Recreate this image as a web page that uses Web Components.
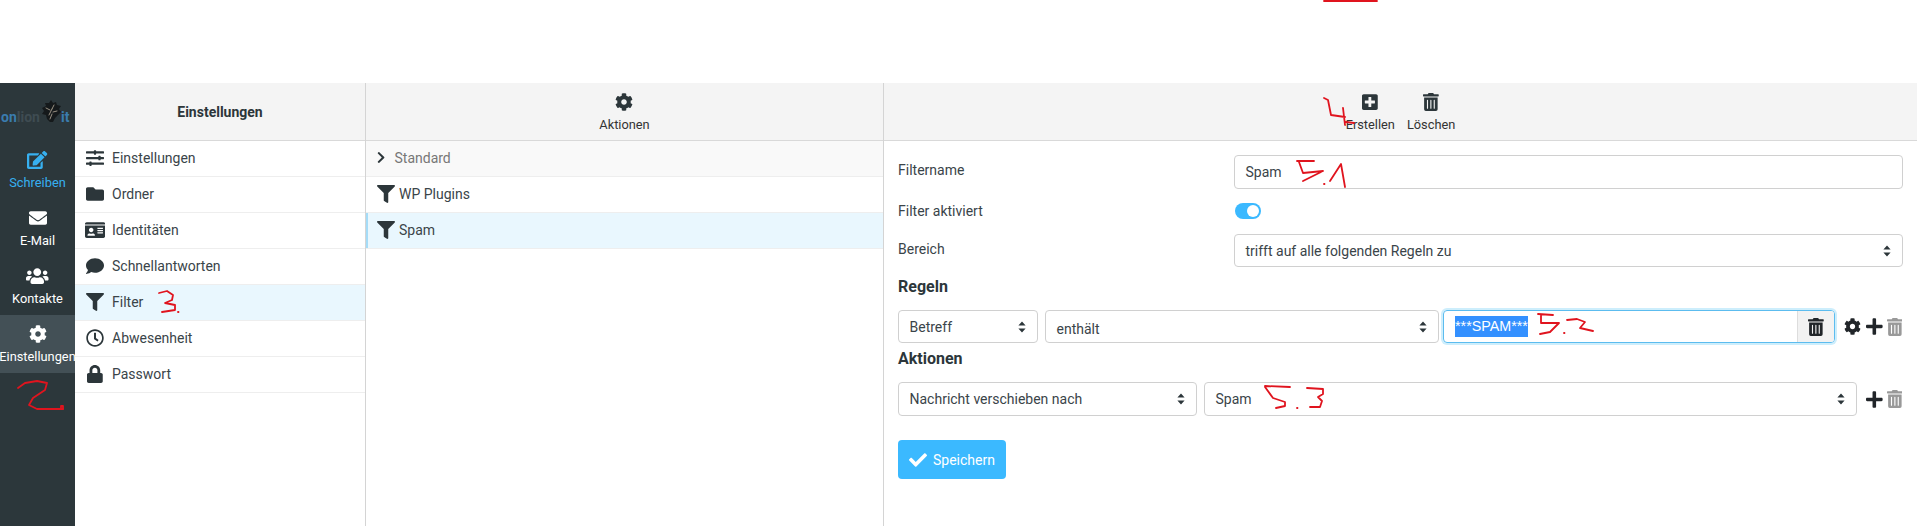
<!DOCTYPE html>
<html lang="de">
<head>
<meta charset="utf-8">
<title>Einstellungen</title>
<style>
    html, body { margin: 0; height: 100%; background: #fff; }
    body { font: 14px Roboto, "Liberation Sans", sans-serif; color: #2c363a; overflow: hidden; }
    settings-page { height: 526px; }
</style>
</head>
<body>
<settings-page>
    <side-rail slot="rail">
        <rail-item icon="edit" tone="blue">Schreiben</rail-item>
        <rail-item icon="envelope">E-Mail</rail-item>
        <rail-item icon="users">Kontakte</rail-item>
        <rail-item icon="cog" active>Einstellungen</rail-item>
    </side-rail>
    <list-pane slot="sections" width="291">
        <pane-head slot="head"><strong>Einstellungen</strong></pane-head>
        <list-row icon="sliders">Einstellungen</list-row>
        <list-row icon="folder">Ordner</list-row>
        <list-row icon="idcard">Identitäten</list-row>
        <list-row icon="comment">Schnellantworten</list-row>
        <list-row icon="filter" selected>Filter</list-row>
        <list-row icon="clock">Abwesenheit</list-row>
        <list-row icon="lock">Passwort</list-row>
    </list-pane>
    <list-pane slot="filters" width="518">
        <pane-head slot="head"><head-action icon="cog">Aktionen</head-action></pane-head>
        <list-row kind="group" icon="chevron">Standard</list-row>
        <list-row kind="filter" icon="filter">WP Plugins</list-row>
        <list-row kind="filter" icon="filter" selected marked>Spam</list-row>
    </list-pane>
    <div slot="main">
        <pane-head>
            <head-action icon="plussquare">Erstellen</head-action>
            <head-action icon="trash">Löschen</head-action>
        </pane-head>
        <filter-form></filter-form>
    </div>
    <ink-marks slot="ink"></ink-marks>
</settings-page>

<script>
const ICONS = {
    cog: [512, 'M487.4 315.7l-42.6-24.6c4.3-23.2 4.3-47 0-70.2l42.6-24.6c4.9-2.8 7.1-8.6 5.5-14-11.1-35.6-30-67.8-54.7-94.6-3.8-4.1-10-5.1-14.8-2.3L380.8 110c-17.9-15.4-38.5-27.3-60.8-35.1V25.8c0-5.6-3.9-10.5-9.4-11.7-36.7-8.2-74.3-7.8-109.2 0-5.5 1.2-9.4 6.1-9.4 11.7V75c-22.2 7.9-42.8 19.8-60.8 35.1L88.7 85.5c-4.9-2.8-11-1.9-14.8 2.3-24.7 26.7-43.6 58.9-54.7 94.6-1.7 5.4.6 11.2 5.5 14L67.3 221c-4.3 23.2-4.3 47 0 70.2l-42.6 24.6c-4.9 2.8-7.1 8.6-5.5 14 11.1 35.6 30 67.8 54.7 94.6 3.8 4.1 10 5.1 14.8 2.3l42.6-24.6c17.9 15.4 38.5 27.3 60.8 35.1v49.2c0 5.6 3.9 10.5 9.4 11.7 36.7 8.2 74.3 7.8 109.2 0 5.5-1.2 9.4-6.1 9.4-11.7v-49.2c22.2-7.9 42.8-19.8 60.8-35.1l42.6 24.6c4.9 2.8 11 1.9 14.8-2.3 24.7-26.7 43.6-58.9 54.7-94.6 1.5-5.5-.7-11.3-5.6-14.1zM256 336c-44.1 0-80-35.9-80-80s35.9-80 80-80 80 35.9 80 80-35.9 80-80 80z'],
    filter: [512, 'M487.976 0H24.028C2.71 0-8.047 25.866 7.058 40.971L192 225.941V432c0 7.831 3.821 15.17 10.237 19.662l80 55.98C298.02 518.69 320 507.493 320 487.98V225.941l184.947-184.97C520.021 25.896 509.338 0 487.976 0z'],
    plus: [448, 'M416 208H272V64c0-17.67-14.33-32-32-32h-32c-17.67 0-32 14.33-32 32v144H32c-17.67 0-32 14.33-32 32v32c0 17.67 14.33 32 32 32h144v144c0 17.67 14.33 32 32 32h32c17.67 0 32-14.33 32-32V304h144c17.67 0 32-14.33 32-32v-32c0-17.67-14.33-32-32-32z'],
    trash: [448, 'M32 464a48 48 0 0 0 48 48h288a48 48 0 0 0 48-48V128H32zm272-256a16 16 0 0 1 32 0v224a16 16 0 0 1-32 0zm-96 0a16 16 0 0 1 32 0v224a16 16 0 0 1-32 0zm-96 0a16 16 0 0 1 32 0v224a16 16 0 0 1-32 0zM432 32H312l-9.4-18.7A24 24 0 0 0 281.1 0H166.8a23.72 23.72 0 0 0-21.4 13.3L136 32H16A16 16 0 0 0 0 48v32a16 16 0 0 0 16 16h416a16 16 0 0 0 16-16V48a16 16 0 0 0-16-16z'],
    plussquare: [448, 'M400 32H48C21.5 32 0 53.5 0 80v352c0 26.5 21.5 48 48 48h352c26.5 0 48-21.5 48-48V80c0-26.5-21.5-48-48-48zm-32 252c0 6.6-5.4 12-12 12h-92v92c0 6.6-5.4 12-12 12h-56c-6.6 0-12-5.4-12-12v-92H92c-6.6 0-12-5.4-12-12v-56c0-6.6 5.4-12 12-12h92v-92c0-6.6 5.4-12 12-12h56c6.6 0 12 5.4 12 12v92h92c6.6 0 12 5.4 12 12v56z'],
    check: [512, 'M173.898 439.404l-166.4-166.4c-9.997-9.997-9.997-26.206 0-36.204l36.203-36.204c9.997-9.998 26.207-9.998 36.204 0L192 312.69 432.095 72.596c9.997-9.997 26.207-9.997 36.204 0l36.203 36.204c9.997 9.997 9.997 26.206 0 36.204l-294.4 294.401c-9.998 9.997-26.207 9.997-36.204-.001z'],
    chevron: [320, 'M285.476 272.971L91.132 467.314c-9.373 9.373-24.569 9.373-33.941 0l-22.667-22.667c-9.357-9.357-9.375-24.522-.04-33.901L188.505 256 34.484 101.255c-9.335-9.379-9.317-24.544.04-33.901l22.667-22.667c9.373-9.373 24.569-9.373 33.941 0L285.475 239.03c9.373 9.372 9.373 24.568.001 33.941z'],
    envelope: [512, 'M502.3 190.8c3.9-3.1 9.7-.2 9.7 4.7V400c0 26.5-21.5 48-48 48H48c-26.5 0-48-21.5-48-48V195.6c0-5 5.7-7.8 9.7-4.7 22.4 17.4 52.1 39.5 154.1 113.6 21.1 15.4 56.7 47.8 92.2 47.6 35.7.3 72-32.8 92.3-47.6 102-74.1 131.6-96.3 154-113.7zM256 320c23.2.4 56.6-29.2 73.4-41.4 132.7-96.3 142.8-104.7 173.4-128.7 5.8-4.5 9.2-11.5 9.2-18.9v-19c0-26.5-21.5-48-48-48H48C21.5 64 0 85.5 0 112v19c0 7.4 3.4 14.3 9.2 18.9 30.6 23.9 40.7 32.4 173.4 128.7 16.8 12.2 50.2 41.8 73.4 41.4z'],
    folder: [512, 'M464 128H272l-64-64H48C21.49 64 0 85.49 0 112v288c0 26.51 21.49 48 48 48h416c26.51 0 48-21.49 48-48V176c0-26.51-21.49-48-48-48z'],
    comment: [512, 'M256 32C114.6 32 0 125.1 0 240c0 49.6 21.4 95 57 130.7C44.5 421.1 2.7 466 2.2 466.5c-2.2 2.3-2.8 5.7-1.5 8.7S4.8 480 8 480c66.3 0 116-31.8 140.6-51.4 32.7 12.3 69 19.4 107.4 19.4 141.4 0 256-93.1 256-208S397.4 32 256 32z'],
    lock: [448, 'M400 224h-24v-72C376 68.2 307.8 0 224 0S72 68.2 72 152v72H48c-26.5 0-48 21.5-48 48v192c0 26.5 21.5 48 48 48h352c26.5 0 48-21.5 48-48V272c0-26.5-21.5-48-48-48zm-104 0H152v-72c0-39.7 32.3-72 72-72s72 32.3 72 72v72z'],
    clock: [512, 'M256 8C119 8 8 119 8 256s111 248 248 248 248-111 248-248S393 8 256 8zm0 448c-110.5 0-200-89.5-200-200S145.5 56 256 56s200 89.5 200 200-89.5 200-200 200zm61.8-104.4l-84.9-61.7c-3.1-2.3-4.9-5.9-4.9-9.7V116c0-6.6 5.4-12 12-12h32c6.6 0 12 5.4 12 12v141.7l66.8 48.6c5.4 3.9 6.5 11.4 2.6 16.8L334.6 349c-3.9 5.3-11.4 6.5-16.8 2.6z'],
    edit: [576, 'M402.6 83.2l90.2 90.2c3.8 3.8 3.8 10 0 13.8L274.4 405.6l-92.8 10.3c-12.4 1.4-22.9-9.1-21.5-21.5l10.3-92.8L388.8 83.2c3.8-3.8 10-3.8 13.8 0zm162-22.9l-48.8-48.8c-15.2-15.2-39.9-15.2-55.2 0l-35.4 35.4c-3.8 3.8-3.8 10 0 13.8l90.2 90.2c3.8 3.8 10 3.8 13.8 0l35.4-35.4c15.2-15.3 15.2-40 0-55.2zM384 346.2V448H64V128h229.8c3.2 0 6.2-1.3 8.5-3.5l40-40c7.6-7.6 2.2-20.5-8.5-20.5H48C21.5 64 0 85.5 0 112v352c0 26.5 21.5 48 48 48h352c26.5 0 48-21.5 48-48V306.2c0-10.7-12.9-16-20.5-8.5l-40 40c-2.2 2.3-3.5 5.3-3.5 8.5z'],
    users: [640, 'M96 224c35.3 0 64-28.7 64-64s-28.7-64-64-64-64 28.7-64 64 28.7 64 64 64zm448 0c35.3 0 64-28.7 64-64s-28.7-64-64-64-64 28.7-64 64 28.7 64 64 64zm32 32h-64c-17.6 0-33.5 7.1-45.1 18.6 40.3 22.1 68.9 62 75.1 109.4h66c17.7 0 32-14.3 32-32v-32c0-35.3-28.7-64-64-64zm-256 0c61.9 0 112-50.1 112-112S381.9 32 320 32 208 82.1 208 144s50.1 112 112 112zm76.8 32h-8.3c-20.8 10-43.9 16-68.5 16s-47.6-6-68.5-16h-8.3C179.6 288 128 339.6 128 403.2V432c0 26.5 21.5 48 48 48h288c26.5 0 48-21.5 48-48v-28.8c0-63.6-51.6-115.2-115.2-115.2zm-223.7-13.4C161.5 263.1 145.6 256 128 256H64c-35.3 0-64 28.7-64 64v32c0 17.7 14.3 32 32 32h65.9c6.3-47.4 34.9-87.3 75.2-109.4z'],
    sliders: [512, 'M496 384H160v-16c0-8.8-7.2-16-16-16h-32c-8.8 0-16 7.2-16 16v16H16c-8.8 0-16 7.2-16 16v32c0 8.8 7.2 16 16 16h80v16c0 8.8 7.2 16 16 16h32c8.8 0 16-7.2 16-16v-16h336c8.8 0 16-7.2 16-16v-32c0-8.8-7.2-16-16-16zm0-160h-80v-16c0-8.8-7.2-16-16-16h-32c-8.8 0-16 7.2-16 16v16H16c-8.8 0-16 7.2-16 16v32c0 8.8 7.2 16 16 16h336v16c0 8.8 7.2 16 16 16h32c8.8 0 16-7.2 16-16v-16h80c8.8 0 16-7.2 16-16v-32c0-8.8-7.2-16-16-16zm0-160H288V48c0-8.8-7.2-16-16-16h-32c-8.8 0-16 7.2-16 16v16H16C7.2 64 0 71.2 0 80v32c0 8.8 7.2 16 16 16h208v16c0 8.8 7.2 16 16 16h32c8.8 0 16-7.2 16-16v-16h208c8.8 0 16-7.2 16-16V80c0-8.8-7.2-16-16-16z'],
    idcard: [576, 'M528 32H48C21.5 32 0 53.5 0 80v16h576V80c0-26.5-21.5-48-48-48zM0 432c0 26.5 21.5 48 48 48h480c26.5 0 48-21.5 48-48V128H0v304zm352-232c0-4.4 3.6-8 8-8h144c4.4 0 8 3.6 8 8v16c0 4.4-3.6 8-8 8H360c-4.4 0-8-3.6-8-8v-16zm0 64c0-4.4 3.6-8 8-8h144c4.4 0 8 3.6 8 8v16c0 4.4-3.6 8-8 8H360c-4.4 0-8-3.6-8-8v-16zm0 64c0-4.4 3.6-8 8-8h144c4.4 0 8 3.6 8 8v16c0 4.4-3.6 8-8 8H360c-4.4 0-8-3.6-8-8v-16zM176 192c35.3 0 64 28.7 64 64s-28.7 64-64 64-64-28.7-64-64 28.7-64 64-64zM67.1 396.2C75.5 370.5 99.6 352 128 352h8.2c12.3 5.1 25.7 8 39.8 8s27.6-2.9 39.8-8h8.2c28.4 0 52.5 18.5 60.9 44.2 3.2 9.9-5.2 19.8-15.6 19.8H82.7c-10.4 0-18.8-10-15.6-19.8z']
};

const iconSvg = (name, height, color = 'currentColor') => {
    const [w, d] = ICONS[name];
    return `<svg width="${height * w / 512}" height="${height}" viewBox="0 0 ${w} 512" fill="${color}" style="display:block;flex:none"><path d="${d}"/></svg>`;
};

const sortArrows = '<svg width="8" height="12" viewBox="0 0 8 12" fill="#2c363a" style="flex:none"><path d="M4 0.5 7.6 4.6H.4zM4 11.5.4 7.4h7.2z"/></svg>';

// small base class: every element renders its shadow root once from render()
class ShadowElement extends HTMLElement {
    constructor() {
        super();
        this.attachShadow({ mode: 'open' });
    }
    connectedCallback() {
        this.shadowRoot.innerHTML = this.render();
    }
}

class SettingsPage extends ShadowElement {
    render() {
        return `<style>
            :host { display: block; position: relative; padding-top: 83px; box-sizing: border-box; }
            .app { display: flex; height: 443px; }
            ::slotted([slot=main]) { flex: 1; min-width: 0; }
        </style>
        <div class="app">
            <slot name="rail"></slot>
            <slot name="sections"></slot>
            <slot name="filters"></slot>
            <slot name="main"></slot>
        </div>
        <slot name="ink"></slot>`;
    }
}

class SideRail extends ShadowElement {
    render() {
        return `<style>
            :host { display: block; width: 75px; flex: none; background: #2c373b; overflow: hidden; }
            .logo { height: 58px; box-sizing: border-box; position: relative; display: flex; align-items: center; font-weight: 700; font-size: 14px; padding: 9px 0 0 1px; white-space: nowrap; }
            .on { color: #3a7cae; }
            .lion { color: #3f4c52; }
            .it { color: #3a7cae; margin-left: 21px; }
            svg { position: absolute; left: 41px; top: 17px; }
        </style>
        <div class="logo"><span class="on">on</span><span class="lion">lion</span><span class="it">it</span>
            <svg width="21" height="23" viewBox="0 0 21 23" fill="none" stroke-linecap="round">
                <path d="M10 0 8 3 4 3 5 6 1 8 3 11 1 14 5 15 6 19 9 22 12 22 14 18 17 15 20 12 18 9 20 6 16 5 15 2 12 3z" fill="#15191b"/>
                <path d="M5 8l4 2M8 15l3-6M13 5l-2 4M16 11l-4 1M11 14l-2 5" stroke="#b9ad9c" stroke-width=".8"/>
            </svg>
        </div>
        <slot></slot>`;
    }
}

class RailItem extends ShadowElement {
    render() {
        const tone = this.getAttribute('tone') === 'blue' ? '#37b0f0' : '#fff';
        const active = this.hasAttribute('active');
        return `<style>
            :host { display: block; height: 58px; }
            .item { height: 100%; display: flex; flex-direction: column; align-items: center; padding-top: 9px; box-sizing: border-box; color: ${tone}; background: ${active ? '#435056' : 'transparent'}; font-size: 12.8px; white-space: nowrap; }
            .icon { height: 20px; display: flex; align-items: center; justify-content: center; margin-bottom: 5px; }
        </style>
        <div class="item"><span class="icon">${iconSvg(this.getAttribute('icon'), 18)}</span><slot></slot></div>`;
    }
}

class ListPane extends ShadowElement {
    render() {
        return `<style>
            :host { display: block; width: ${this.getAttribute('width')}px; flex: none; box-sizing: border-box; border-right: 1px solid #d4d4d4; }
        </style>
        <slot name="head"></slot>
        <slot></slot>`;
    }
}

class PaneHead extends ShadowElement {
    render() {
        return `<style>
            :host { display: flex; height: 58px; box-sizing: border-box; background: #f4f4f4; border-bottom: 1px solid #d9d9d9; align-items: center; justify-content: center; gap: 12px; }
            ::slotted(strong) { font-weight: 700; font-size: 14px; }
        </style>
        <slot></slot>`;
    }
}

class HeadAction extends ShadowElement {
    render() {
        return `<style>
            :host { display: flex; flex-direction: column; align-items: center; font-size: 12.8px; color: #333; padding-top: 1px; }
            .icon { height: 20px; display: flex; align-items: center; color: #2c363a; margin-bottom: 5px; }
        </style>
        <span class="icon">${iconSvg(this.getAttribute('icon'), 18)}</span><slot></slot>`;
    }
}

class ListRow extends ShadowElement {
    render() {
        const kind = this.getAttribute('kind') || 'section';
        const selected = this.hasAttribute('selected');
        const group = kind === 'group';
        const left = kind === 'section' ? 10 : group ? 10.5 : 11;
        const slotW = kind === 'section' ? 20 : group ? 9 : 18;
        const gap = kind === 'section' ? 7 : group ? 9 : 4;
        return `<style>
            :host { display: block; height: 36px; box-sizing: border-box; border-bottom: 1px solid #eee; background: ${selected ? '#e9f7fe' : group ? '#f9f9f9' : '#fff'}; }
            .row { height: 100%; display: flex; align-items: center; box-sizing: border-box; padding: 0 0 2px ${left}px; ${this.hasAttribute('marked') ? 'box-shadow: inset 2px 0 0 #a5dcf7;' : ''} color: ${group ? '#777' : '#3a4449'}; }
            .icon { width: ${slotW}px; margin-right: ${gap}px; display: flex; justify-content: center; color: #2c363a; }
        </style>
        <div class="row"><span class="icon">${iconSvg(this.getAttribute('icon'), group ? 13 : 18)}</span><slot></slot></div>`;
    }
}

class UiSelect extends ShadowElement {
    render() {
        return `<style>
            :host { display: flex; align-items: center; justify-content: space-between; box-sizing: border-box; height: var(--h, 33px); border: 1px solid #d0d0d0; border-radius: 4px; padding: 0 11px 0 10.5px; background: #fff; color: #3a4449; white-space: nowrap; }
            .value { display: block; transform: translateY(var(--text-shift, 0)); }
        </style>
        <span class="value"><slot></slot></span>${sortArrows}`;
    }
}

class SwitchToggle extends ShadowElement {
    render() {
        return `<style>
            :host { display: block; width: 26px; height: 16px; border-radius: 8px; background: #3bb9ff; position: relative; margin-left: 1px; }
            i { position: absolute; right: 2px; top: 2px; width: 12px; height: 12px; border-radius: 50%; background: #fff; }
        </style><i></i>`;
    }
}

class IconTools extends ShadowElement {
    render() {
        const gear = this.hasAttribute('gear') ? `<span class="gear">${iconSvg('cog', 17, '#212529')}</span>` : '';
        return `<style>
            :host { display: flex; align-items: center; gap: 4px; height: 100%; flex: none; }
            .gear { margin-right: 1px; }
        </style>
        ${gear}${iconSvg('plus', 19, '#212529')}${iconSvg('trash', 18, '#999')}`;
    }
}

class FilterForm extends ShadowElement {
    render() {
        return `<style>
            :host { display: block; padding: 14px 14px 0 14px; }
            .field { display: flex; align-items: center; }
            .field > span { width: 336px; flex: none; color: #3a4449; }
            .grow { flex: 1; min-width: 0; }
            .input { box-sizing: border-box; height: 34px; border: 1px solid #d0d0d0; border-radius: 4px; padding: 0 10.5px; display: flex; align-items: center; color: #3a4449; }
            .name { margin-bottom: 10px; }
            .name > span { padding-bottom: 4px; }
            .active { height: 23px; margin-bottom: 12px; }
            .scope > span { padding-bottom: 3px; }
            h3 { margin: 0; font-size: 16px; font-weight: 700; color: #2c363a; line-height: 20px; }
            .rules { margin-top: 10px; }
            .line { display: flex; align-items: center; height: 33px; }
            .rule { margin: 13px 0 6px; gap: 7px; }
            .act { margin: 13px 0 24px; gap: 7px; height: 34px; }
            .act ui-select { --h: 34px; }
            .focus { position: relative; width: 392px; flex: none; height: 33px; box-sizing: border-box; border: 1px solid #5cbcef; border-radius: 4px; box-shadow: 0 0 0 2px #cdeefc; display: flex; margin-left: -3px; }
            .focus .text { flex: 1; padding-left: 11px; display: flex; align-items: center; }
            mark { background: #3390ff; color: #fff; font-family: "Liberation Sans", Arial, sans-serif; font-size: 14.3px; line-height: 21px; }
            .del { width: 36px; border-left: 1px solid #ddd; background: #f2f2f2; border-radius: 0 3px 3px 0; display: flex; align-items: center; justify-content: center; color: #212529; }
            .save { display: inline-flex; align-items: center; gap: 6px; height: 39px; width: 108px; box-sizing: border-box; padding-left: 11px; background: #3bb9ff; border-radius: 4px; color: #fff; }
        </style>
        <div class="field name"><span>Filtername</span><div class="input grow">Spam</div></div>
        <div class="field active"><span>Filter aktiviert</span><switch-toggle></switch-toggle></div>
        <div class="field scope"><span>Bereich</span><ui-select class="grow">trifft auf alle folgenden Regeln zu</ui-select></div>
        <h3 class="rules">Regeln</h3>
        <div class="line rule">
            <ui-select style="width:140px;flex:none;--text-shift:-.5px">Betreff</ui-select>
            <ui-select style="width:394px;flex:none;--text-shift:1.5px">enthält</ui-select>
            <div class="focus"><div class="text"><mark>***SPAM***</mark></div><div class="del">${iconSvg('trash', 18)}</div></div>
            <icon-tools gear style="margin-left:2px"></icon-tools>
        </div>
        <h3>Aktionen</h3>
        <div class="line act">
            <ui-select style="width:299px;flex:none">Nachricht verschieben nach</ui-select>
            <ui-select style="width:653px;flex:none">Spam</ui-select>
            <icon-tools style="margin-left:2px"></icon-tools>
        </div>
        <div class="save">${iconSvg('check', 18)}Speichern</div>`;
    }
}

// the red pen strokes someone drew on the screenshot
class InkMarks extends ShadowElement {
    render() {
        const strokes = [
            'M1324 1H1377',
            'M18 388 25 383 37 381 47 383 45 390 33 398 29 405 37 409 63 409',
            'M61 406h2v3h-2z',
            'M159 293 167 291 173 295 172 300 165 303 175 305 175 310 162 312',
            'M178 312h.5',
            'M1324 98 1328 100 1331 115 1345 117M1343 108 1345 125M1346 122 1354 123',
            'M1297 161 1314 161M1299 162 1303 173 1323 171 1303 181',
            'M1324 184h.5M1330 181 1341 164 1345 187',
            'M1538 314 1553 315M1541 315 1541 323 1559 323 1550 332 1540 334',
            'M1564 333h.5M1567 320 1577 319 1585 322 1580 328 1593 331',
            'M1265 386 1290 387M1265 387 1273 398 1285 402 1285 406 1276 408',
            'M1297 408h.5M1307 388 1323 389 1323 394 1318 397 1322 401 1320 407 1310 407'
        ];
        return `<style>
            :host { position: absolute; inset: 0; pointer-events: none; display: block; }
            svg { display: block; }
        </style>
        <svg width="1917" height="526" fill="none" stroke="#e0141e" stroke-width="1.8" stroke-linejoin="round" stroke-linecap="round">
            ${strokes.map(d => `<path d="${d}"/>`).join('')}
        </svg>`;
    }
}

customElements.define('settings-page', SettingsPage);
customElements.define('side-rail', SideRail);
customElements.define('rail-item', RailItem);
customElements.define('list-pane', ListPane);
customElements.define('pane-head', PaneHead);
customElements.define('head-action', HeadAction);
customElements.define('list-row', ListRow);
customElements.define('ui-select', UiSelect);
customElements.define('switch-toggle', SwitchToggle);
customElements.define('icon-tools', IconTools);
customElements.define('filter-form', FilterForm);
customElements.define('ink-marks', InkMarks);
</script>
</body>
</html>
